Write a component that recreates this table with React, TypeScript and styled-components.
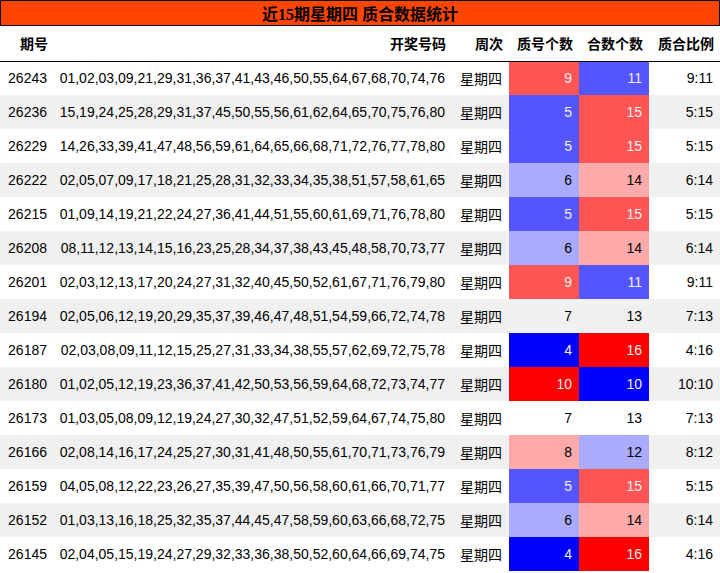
import React from "react";
import styled, { createGlobalStyle } from "styled-components";

const GlobalStyle = createGlobalStyle`
  body {
    margin: 0;
    background: #ffffff;
    font-family: "Liberation Sans", Arial, "Noto Sans CJK SC", sans-serif;
  }
`;

type Row = [string, string, number];

const rows: Row[] = [
  ["26243", "01,02,03,09,21,29,31,36,37,41,43,46,50,55,64,67,68,70,74,76", 9],
  ["26236", "15,19,24,25,28,29,31,37,45,50,55,56,61,62,64,65,70,75,76,80", 5],
  ["26229", "14,26,33,39,41,47,48,56,59,61,64,65,66,68,71,72,76,77,78,80", 5],
  ["26222", "02,05,07,09,17,18,21,25,28,31,32,33,34,35,38,51,57,58,61,65", 6],
  ["26215", "01,09,14,19,21,22,24,27,36,41,44,51,55,60,61,69,71,76,78,80", 5],
  ["26208", "08,11,12,13,14,15,16,23,25,28,34,37,38,43,45,48,58,70,73,77", 6],
  ["26201", "02,03,12,13,17,20,24,27,31,32,40,45,50,52,61,67,71,76,79,80", 9],
  ["26194", "02,05,06,12,19,20,29,35,37,39,46,47,48,51,54,59,66,72,74,78", 7],
  ["26187", "02,03,08,09,11,12,15,25,27,31,33,34,38,55,57,62,69,72,75,78", 4],
  ["26180", "01,02,05,12,19,23,36,37,41,42,50,53,56,59,64,68,72,73,74,77", 10],
  ["26173", "01,03,05,08,09,12,19,24,27,30,32,47,51,52,59,64,67,74,75,80", 7],
  ["26166", "02,08,14,16,17,24,25,27,30,31,41,48,50,55,61,70,71,73,76,79", 8],
  ["26159", "04,05,08,12,22,23,26,27,35,39,47,50,56,58,60,61,66,70,71,77", 5],
  ["26152", "01,03,13,16,18,25,32,35,37,44,45,47,58,59,60,63,66,68,72,75", 6],
  ["26145", "02,04,05,15,19,24,27,29,32,33,36,38,50,52,60,64,66,69,74,75", 4],
];

// deviation from the 7:13 baseline -> cell colour
const heat = (d: number): { bg: string; fg: string } => {
  const map: Record<string, { bg: string; fg: string }> = {
    "-3": { bg: "#0000ff", fg: "#f1f1f1" },
    "-2": { bg: "#5555ff", fg: "#f1f1f1" },
    "-1": { bg: "#aaaaff", fg: "#000000" },
    "0": { bg: "transparent", fg: "#000000" },
    "1": { bg: "#ffaaaa", fg: "#000000" },
    "2": { bg: "#ff5555", fg: "#f1f1f1" },
    "3": { bg: "#ff0000", fg: "#f1f1f1" },
  };
  return map[String(Math.max(-3, Math.min(3, d)))];
};

const Wrap = styled.div`
  width: 720px;
`;

const Title = styled.div`
  height: 24px;
  border: 1px solid #000;
  background: #ff4500;
  display: flex;
  align-items: center;
  justify-content: center;
  font-family: "Liberation Serif", "Noto Sans CJK SC", serif;
  font-weight: bold;
  font-size: 16px;
  color: #000;
`;

const Table = styled.table`
  width: 720px;
  border-collapse: collapse;
  table-layout: fixed;
  font-size: 14px;
  color: #000;
`;

const Head = styled.th<{ $w: number }>`
  width: ${(p) => p.$w}px;
  height: 35px;
  padding: 0 6px 0 0;
  text-align: right;
  font-weight: bold;
  border-bottom: 1px solid #000;
  box-sizing: border-box;
`;

const BodyRow = styled.tr<{ $odd: boolean }>`
  height: 34px;
  background: ${(p) => (p.$odd ? "#f0f0f0" : "#ffffff")};
`;

const Cell = styled.td<{ $bg?: string; $fg?: string }>`
  padding: 0 7px 0 0;
  text-align: right;
  white-space: nowrap;
  background: ${(p) => p.$bg || "transparent"};
  color: ${(p) => p.$fg || "#000"};
`;

const heads: [string, number][] = [
  ["期号", 54],
  ["开奖号码", 398],
  ["周次", 57],
  ["质号个数", 70],
  ["合数个数", 70],
  ["质合比例", 71],
];

export default function App() {
  return (
    <Wrap>
      <GlobalStyle />
      <Title>近15期星期四 质合数据统计</Title>
      <Table>
        <thead>
          <tr>
            {heads.map(([h, w]) => (
              <Head key={h} $w={w}>
                {h}
              </Head>
            ))}
          </tr>
        </thead>
        <tbody>
          {rows.map(([no, nums, p], i) => {
            const c = 20 - p;
            const pc = heat(p - 7);
            const cc = heat(c - 13);
            return (
              <BodyRow key={no} $odd={i % 2 === 1}>
                <Cell>{no}</Cell>
                <Cell>{nums}</Cell>
                <Cell>星期四</Cell>
                <Cell $bg={pc.bg} $fg={pc.fg}>
                  {p}
                </Cell>
                <Cell $bg={cc.bg} $fg={cc.fg}>
                  {c}
                </Cell>
                <Cell>
                  {p}:{c}
                </Cell>
              </BodyRow>
            );
          })}
        </tbody>
      </Table>
    </Wrap>
  );
}
